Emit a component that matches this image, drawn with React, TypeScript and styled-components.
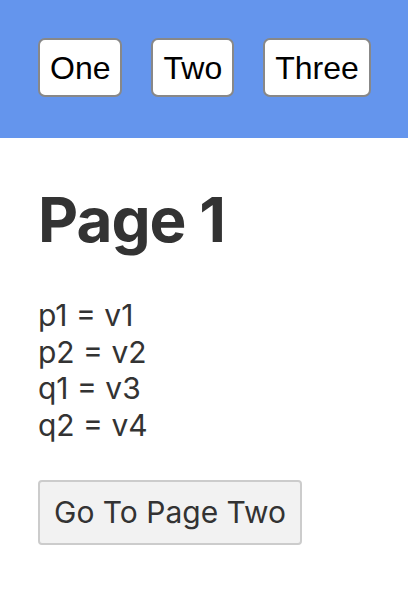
import React from "react";
import styled, { createGlobalStyle } from "styled-components";

const Global = createGlobalStyle`
  html, body { margin: 0; padding: 0; background: #fff; }
  body { font-family: Inter, "Noto Sans", sans-serif; color: #333; }
`;

const Header = styled.header`
  background: #6495ed;
  padding: 38px 38px 41px;
  display: flex;
  gap: 29px;
`;

const NavButton = styled.button`
  font-family: "Liberation Sans", Arial, sans-serif;
  font-size: 32px;
  color: #000;
  background: #fff;
  border: 2px solid #888;
  border-radius: 7px;
  padding: 10px 10px 8px;
  line-height: 37px;
  cursor: pointer;
`;

const Main = styled.main`
  padding: 0 38px;
`;

const Title = styled.h1`
  font-size: 62px;
  font-weight: 700;
  margin: 43px 0 39px;
  line-height: 77px;
  letter-spacing: -1px;
`;

const Params = styled.div`
  font-size: 30px;
  line-height: 36.7px;
`;

const GoButton = styled.button`
  margin-top: 36px;
  font-family: Inter, "Noto Sans", sans-serif;
  font-size: 30px;
  color: #333;
  background: #f2f2f2;
  border: 2px solid #ccc;
  border-radius: 4px;
  padding: 0 14px;
  height: 65px;
  cursor: pointer;
`;

const params = [
  ["p1", "v1"],
  ["p2", "v2"],
  ["q1", "v3"],
  ["q2", "v4"],
];

export default function App() {
  return (
    <>
      <Global />
      <Header>
        <NavButton>One</NavButton>
        <NavButton>Two</NavButton>
        <NavButton>Three</NavButton>
      </Header>
      <Main>
        <Title>Page 1</Title>
        <Params>
          {params.map(([k, v]) => (
            <div key={k}>
              {k} = {v}
            </div>
          ))}
        </Params>
        <GoButton>Go To Page Two</GoButton>
      </Main>
    </>
  );
}
